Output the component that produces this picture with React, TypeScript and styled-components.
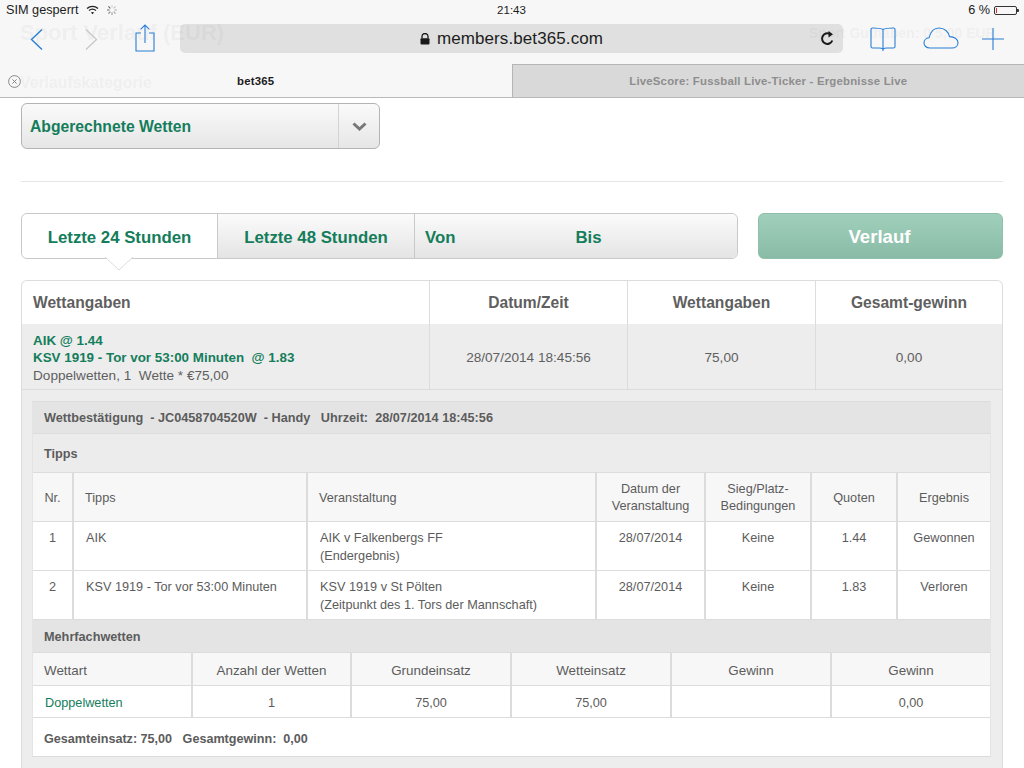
import React from "react";
import styled, { createGlobalStyle } from "styled-components";

const Global = createGlobalStyle`
  html, body { margin: 0; padding: 0; background: #fff; }
  body { width: 1024px; height: 768px; overflow: hidden; font-family: "Liberation Sans", Arial, sans-serif; color: #5c5c5c; }
  * { box-sizing: border-box; }
`;

const GREEN = "#147d5b";
const LINE = "#dcdcdc";

const Page = styled.div`width: 1024px; height: 768px; overflow: hidden; display: flex; flex-direction: column;`;

const Chrome = styled.header`
  position: relative; flex: none; height: 98px; background: #f7f7f7; border-bottom: 1px solid #b9b9b9;
  display: flex; flex-direction: column; overflow: hidden;
`;
const Ghost = styled.span<{ $x: number; $y: number; $size: number }>`
  position: absolute; left: ${p => p.$x}px; top: ${p => p.$y}px; font-size: ${p => p.$size}px; font-weight: 700;
  color: #efefef; white-space: nowrap; line-height: 1; filter: blur(.4px);
`;
const StatusBar = styled.div`
  position: relative; height: 22px; flex: none; display: grid; grid-template-columns: 1fr auto 1fr; align-items: center;
  padding: 0 7px 2px 6px; font-size: 12.7px; color: #1c1c1c; z-index: 3;
`;
const StatusLeft = styled.div`display: flex; align-items: center; gap: 7px;`;
const StatusTime = styled.span`font-size: 11.5px;`;
const StatusRight = styled.div`display: flex; align-items: center; justify-content: flex-end; gap: 4px;`;
const Battery = styled.div`
  position: relative; width: 23px; height: 9px; border: 1px solid #333; border-radius: 2px; padding: 1px;
  &::after { content: ""; position: absolute; right: -3px; top: 2px; width: 2px; height: 3px; background: #333; border-radius: 0 1px 1px 0; }
`;
const BatteryLevel = styled.div`width: 1px; height: 100%; background: #e0312a;`;
const Toolbar = styled.div`
  position: relative; height: 42px; flex: none; display: flex; align-items: flex-start; padding: 2px 20px 0 0; z-index: 3;
`;
const IconSlot = styled.div<{ $w: number; $ml?: number; $mt?: number }>`
  width: ${p => p.$w}px; margin-left: ${p => p.$ml ?? 0}px; margin-top: ${p => p.$mt ?? 0}px; flex: none; display: flex; line-height: 0;
`;
const UrlField = styled.div`
  position: relative; width: 664px; height: 29px; margin-left: 25px; border-radius: 5px; background: rgba(0,0,0,.09);
  display: flex; align-items: center; justify-content: center; gap: 7px; font-size: 17px; color: #1d1d1d; letter-spacing: .1px;
`;
const Reload = styled.div`position: absolute; right: 8px; top: 7px; line-height: 0;`;
const TabStrip = styled.div`position: relative; flex: 1; display: flex; z-index: 1;`;
const BrowserTab = styled.div<{ $active?: boolean }>`
  flex: 1; display: flex; align-items: center; justify-content: center; font-size: 11.4px; font-weight: 700; letter-spacing: .2px;
  color: ${p => (p.$active ? "#1c1c1c" : "#8d8d8d")};
  background: ${p => (p.$active ? "transparent" : "#d9d9d9")};
  border-top: ${p => (p.$active ? "none" : "1px solid #b5b5b5")};
  border-left: ${p => (p.$active ? "none" : "1px solid #b5b5b5")};
`;
const TabClose = styled.div`position: absolute; left: 8px; top: 11px; line-height: 0;`;

const Content = styled.main`flex: 1; padding: 5px 21px 0; display: flex; flex-direction: column; min-height: 0;`;
const Select = styled.div`
  width: 359px; height: 46px; flex: none; display: flex; border: 1px solid #b4b4b4; border-radius: 6px;
  background: linear-gradient(#fafafa, #e6e6e6);
`;
const SelectLabel = styled.div`flex: 1; padding: 2px 0 0 8px; display: flex; align-items: center; font-size: 15.7px; font-weight: 700; color: ${GREEN};`;
const SelectArrow = styled.div`width: 41px; border-left: 1px solid #d3d3d3; display: flex; align-items: center; justify-content: center;`;
const Divider = styled.hr`flex: none; width: 100%; height: 1px; margin: 32px 0 31px; border: 0; background: #e5e5e5;`;
const FilterRow = styled.div`flex: none; display: flex; height: 46px; gap: 20px;`;
const Segments = styled.div`
  width: 717px; display: grid; grid-template-columns: 195px 197px 1fr; border: 1px solid #c9c9c9; border-radius: 6px; position: relative;
`;
const Segment = styled.div<{ $active?: boolean }>`
  display: flex; align-items: center; justify-content: center; font-size: 16.8px; font-weight: 700; color: ${GREEN}; padding-top: 3px;
  background: ${p => (p.$active ? "#fff" : "linear-gradient(#fbfbfb, #e4e4e4)")};
  & + & { border-left: 1px solid #c9c9c9; }
  border-radius: ${p => (p.$active ? "6px 0 0 6px" : "0")};
`;
const DateSegment = styled(Segment)`
  justify-content: flex-start; padding-left: 10px; gap: 120px; border-radius: 0 6px 6px 0;
`;
const Pointer = styled.div`
  position: absolute; left: 83px; top: 100%; width: 28px; height: 14px; line-height: 0; margin-top: -1px;
`;
const HistoryButton = styled.button`
  flex: 1; border: 1px solid #8fc0ab; border-radius: 6px; background: linear-gradient(#a0d0bb, #8abba6); color: #fff;
  font: 700 18.6px "Liberation Sans", Arial, sans-serif; padding: 1px 2px 0 0;
`;
const Card = styled.section`
  flex: 1; margin-top: 21px; border: 1px solid ${LINE}; border-bottom: 0; border-radius: 6px 6px 0 0; background: #ededed; overflow: hidden; min-height: 0;
`;
const SummaryGrid = styled.div`display: grid; grid-template-columns: 407px 198px 188px 1fr;`;
const SummaryHead = styled.div<{ $left?: boolean }>`
  height: 43px; background: #fff; display: flex; align-items: center; font-size: 15.6px; font-weight: 700; color: #5f5f5f;
  justify-content: ${p => (p.$left ? "flex-start" : "center")};
  padding-left: ${p => (p.$left ? "11px" : "0")};
  & + & { border-left: 1px solid ${LINE}; }
`;
const SummaryCell = styled.div<{ $left?: boolean }>`
  height: 66px; border-bottom: 1px solid ${LINE}; display: flex; flex-direction: ${p => (p.$left ? "column" : "row")};
  align-items: ${p => (p.$left ? "flex-start" : "center")}; justify-content: center; font-size: 13.6px; color: #5f5f5f;
  padding: 3px 0 0 ${p => (p.$left ? "11px" : "0")}; line-height: 17.5px;
  & + & { border-left: 1px solid ${LINE}; }
`;
const Pick = styled.div`font-weight: 700; font-size: 13.4px; color: ${GREEN}; white-space: pre;`;
const Stake = styled.div`white-space: pre;`;
const Detail = styled.div`
  margin: 11px 11px 0 10px; border-left: 1px solid #e4e4e4; border-right: 1px solid #e4e4e4; border-bottom: 1px solid ${LINE};
`;
const Bar = styled.div<{ $h: number; $bg: string; $drop?: number }>`
  height: ${p => p.$h}px; background: ${p => p.$bg}; border-top: 1px solid ${LINE}; display: flex; align-items: center;
  padding: ${p => p.$drop ?? 0}px 0 0 11px; font-size: 12.7px; font-weight: 700; color: #5c5c5c; white-space: pre;
`;
const Rows = styled.div<{ $cols: string; $n: number }>`
  display: grid; grid-template-columns: ${p => p.$cols};
  & > * + * { border-left: 2px solid ${LINE}; }
  & > *:nth-child(${p => p.$n}n + 1) { border-left: 0; }
`;
const Cell = styled.div<{ $h: number; $head?: boolean; $left?: boolean; $top?: boolean; $pad?: number; $wrap?: boolean; $big?: boolean }>`
  height: ${p => p.$h}px; background: ${p => (p.$head ? "#f7f7f7" : "#fff")}; border-top: 1px solid ${LINE};
  display: flex; flex-direction: column; line-height: 17.5px; font-size: ${p => (p.$big ? 13.4 : 12.7)}px; color: #5c5c5c;
  justify-content: ${p => (p.$top ? "flex-start" : "center")};
  align-items: ${p => (p.$left ? "flex-start" : "center")};
  text-align: ${p => (p.$left ? "left" : "center")};
  padding: ${p => (p.$top ? 8 : p.$wrap ? 2 : 4)}px 0 0 ${p => (p.$left ? (p.$pad ?? 11) : 0)}px;
  white-space: nowrap;
`;
const TypeLink = styled.span`color: ${GREEN};`;
const Totals = styled.div`
  height: 39px; background: #fff; border-top: 1px solid ${LINE}; display: flex; align-items: center; padding: 3px 0 0 11px;
  font-size: 12.6px; font-weight: 700; color: #5c5c5c; white-space: pre;
`;

const BLUE = "#2a7fd6";

const Wifi = () => (
  <svg width="13" height="10" viewBox="0 0 13 10" fill="none" stroke="#222" strokeWidth="1.3">
    <path d="M1 3.4C4.2.6 8.8.6 12 3.4" /><path d="M3 5.5c2-1.6 5-1.6 7 0" />
    <path d="M6.5 9.2 4.9 7.4c1-.7 2.2-.7 3.2 0z" fill="#222" stroke="none" />
  </svg>
);
const Spinner = () => (
  <svg width="12" height="12" viewBox="0 0 12 12" stroke="#555" strokeWidth="1">
    {[0, 45, 90, 135, 180, 225, 270, 315].map((a, i) => (
      <line key={a} x1="6" y1="1" x2="6" y2="3.6" transform={`rotate(${a} 6 6)`} opacity={0.25 + i * 0.1} />
    ))}
  </svg>
);
const Chevron = ({ dir, color }: { dir: "l" | "r"; color: string }) => (
  <svg width="13" height="21" viewBox="0 0 13 21" fill="none" stroke={color} strokeWidth="1.4">
    <path d={dir === "l" ? "M12 .5 1.500 10.500 12 20.500" : "M1 .5l10.500 10L1 20.500"} />
  </svg>
);
const Share = () => (
  <svg width="20" height="28" viewBox="0 0 20 28" fill="none" stroke={BLUE} strokeWidth="1.1">
    <path d="M6 9H1v18h18V9h-5" /><path d="M10 19V1M5.6 5.4 10 1l4.4 4.4" />
  </svg>
);
const Book = () => (
  <svg width="26" height="24" viewBox="0 0 26 24" fill="none" stroke={BLUE} strokeWidth="1.1">
    <path d="M13 2.500C11.500 1.500 8 1 2.500 1 1.600 1 1 1.600 1 2.500v17c0 .9.600 1.500 1.500 1.500H9c2 0 3.200.3 4 1 .8-.7 2-1 4-1h6.500c.9 0 1.500-.6 1.500-1.500v-17C25 1.600 24.400 1 23.500 1 18 1 14.500 1.500 13 2.500zM13 2.500V24" />
  </svg>
);
const Cloud = () => (
  <svg width="36" height="22" viewBox="0 0 36 22" fill="none" stroke={BLUE} strokeWidth="1.1">
    <path d="M7 21C3.200 21 1 18.700 1 16c0-2.800 2.200-5 5-5.200C7.500 5 11 1 16 1c5.500 0 9.500 3.800 10.500 8.600C31 9.500 35 12 35 15.700 35 18.900 32.300 21 29 21z" />
  </svg>
);
const Plus = () => (
  <svg width="22" height="22" viewBox="0 0 22 22" stroke={BLUE} strokeWidth="1.1">
    <path d="M11 0v22M0 11h22" />
  </svg>
);
const Lock = () => (
  <svg width="10" height="12" viewBox="0 0 10 12">
    <path d="M2 5.500V3.500a3 3 0 0 1 6 0v2" fill="none" stroke="#1a1a1a" strokeWidth="1.300" />
    <rect x="0.500" y="5.200" width="9" height="6.300" rx="1" fill="#1a1a1a" />
  </svg>
);
const ReloadIcon = () => (
  <svg width="15" height="15" viewBox="0 0 15 15" fill="none">
    <path d="M12.300 9.500A5.300 5.300 0 1 1 10 3" stroke="#1a1a1a" strokeWidth="2" />
    <path d="M8.500 0 13 3.200 8.500 6.500z" fill="#1a1a1a" />
  </svg>
);
const CloseIcon = () => (
  <svg width="13" height="13" viewBox="0 0 13 13" fill="none" stroke="#7c7c7c" strokeWidth=".9">
    <circle cx="6.500" cy="6.500" r="5.900" /><path d="M4.400 4.400l4.200 4.200M8.600 4.400l-4.200 4.200" />
  </svg>
);
const Caret = () => (
  <svg width="15" height="9" viewBox="0 0 15 9" fill="none" stroke="#777" strokeWidth="3">
    <path d="M1.500 1.500l6 5.500 6-5.500" />
  </svg>
);
const PointerShape = () => (
  <svg width="28" height="14" viewBox="0 0 28 14">
    <path d="M0 0l14 13L28 0" fill="#fff" stroke="#dcdcdc" />
  </svg>
);

const tipCols = "39px 234px 289px 109px 106px 86px 1fr";
const multiCols = "158px 159px 160px 160px 160px 1fr";

export default function App() {
  return (
    <Page>
      <Global />
      <Chrome>
        <Ghost $x={20} $y={22} $size={22}>Sport Verlauf (EUR)</Ghost>
        <Ghost $x={20} $y={75} $size={15.8}>Verlaufskategorie</Ghost>
        <Ghost $x={809} $y={26} $size={14}>Sport Guthaben: 0 5,00 EUR</Ghost>
        <StatusBar>
          <StatusLeft>SIM gesperrt <Wifi /><Spinner /></StatusLeft>
          <StatusTime>21:43</StatusTime>
          <StatusRight>6 %<Battery><BatteryLevel /></Battery></StatusRight>
        </StatusBar>
        <Toolbar>
          <IconSlot $w={13} $ml={30} $mt={5}><Chevron dir="l" color={BLUE} /></IconSlot>
          <IconSlot $w={13} $ml={42} $mt={5}><Chevron dir="r" color="#c9c9c9" /></IconSlot>
          <IconSlot $w={20} $ml={37}><Share /></IconSlot>
          <UrlField>
            <Lock /> members.bet365.com
            <Reload><ReloadIcon /></Reload>
          </UrlField>
          <IconSlot $w={26} $ml={27} $mt={3}><Book /></IconSlot>
          <IconSlot $w={36} $ml={27} $mt={3}><Cloud /></IconSlot>
          <IconSlot $w={22} $ml={23} $mt={4}><Plus /></IconSlot>
        </Toolbar>
        <TabStrip>
          <TabClose><CloseIcon /></TabClose>
          <BrowserTab $active>bet365</BrowserTab>
          <BrowserTab>LiveScore: Fussball Live-Ticker - Ergebnisse Live</BrowserTab>
        </TabStrip>
      </Chrome>
      <Content>
        <Select>
          <SelectLabel>Abgerechnete Wetten</SelectLabel>
          <SelectArrow><Caret /></SelectArrow>
        </Select>
        <Divider />
        <FilterRow>
          <Segments>
            <Segment $active>Letzte 24 Stunden</Segment>
            <Segment>Letzte 48 Stunden</Segment>
            <DateSegment><span>Von</span><span>Bis</span></DateSegment>
            <Pointer><PointerShape /></Pointer>
          </Segments>
          <HistoryButton>Verlauf</HistoryButton>
        </FilterRow>
        <Card>
          <SummaryGrid>
            <SummaryHead $left>Wettangaben</SummaryHead>
            <SummaryHead>Datum/Zeit</SummaryHead>
            <SummaryHead>Wettangaben</SummaryHead>
            <SummaryHead>Gesamt-gewinn</SummaryHead>
            <SummaryCell $left>
              <Pick>AIK @ 1.44</Pick>
              <Pick>KSV 1919 - Tor vor 53:00 Minuten  @ 1.83</Pick>
              <Stake>Doppelwetten, 1  Wette * €75,00</Stake>
            </SummaryCell>
            <SummaryCell>28/07/2014 18:45:56</SummaryCell>
            <SummaryCell>75,00</SummaryCell>
            <SummaryCell>0,00</SummaryCell>
          </SummaryGrid>
          <Detail>
            <Bar $h={32} $bg="#e4e4e4">Wettbestätigung  - JC0458704520W  - Handy   Uhrzeit:  28/07/2014 18:45:56</Bar>
            <Bar $h={39} $bg="#ececec" $drop={1}>Tipps</Bar>
            <Rows $cols={tipCols} $n={7}>
              <Cell $h={49} $head>Nr.</Cell>
              <Cell $h={49} $head $left>Tipps</Cell>
              <Cell $h={49} $head $left>Veranstaltung</Cell>
              <Cell $h={49} $head $wrap>Datum der<br />Veranstaltung</Cell>
              <Cell $h={49} $head $wrap>Sieg/Platz-<br />Bedingungen</Cell>
              <Cell $h={49} $head>Quoten</Cell>
              <Cell $h={49} $head>Ergebnis</Cell>

              <Cell $h={49} $top>1</Cell>
              <Cell $h={49} $top $left $pad={12}>AIK</Cell>
              <Cell $h={49} $top $left $pad={12}>AIK v Falkenbergs FF<br />(Endergebnis)</Cell>
              <Cell $h={49} $top>28/07/2014</Cell>
              <Cell $h={49} $top>Keine</Cell>
              <Cell $h={49} $top>1.44</Cell>
              <Cell $h={49} $top>Gewonnen</Cell>

              <Cell $h={49} $top>2</Cell>
              <Cell $h={49} $top $left $pad={12}>KSV 1919 - Tor vor 53:00 Minuten</Cell>
              <Cell $h={49} $top $left $pad={12}>KSV 1919 v St Pölten<br />(Zeitpunkt des 1. Tors der Mannschaft)</Cell>
              <Cell $h={49} $top>28/07/2014</Cell>
              <Cell $h={49} $top>Keine</Cell>
              <Cell $h={49} $top>1.83</Cell>
              <Cell $h={49} $top>Verloren</Cell>
            </Rows>
            <Bar $h={33} $bg="#e4e4e4" $drop={2}>Mehrfachwetten</Bar>
            <Rows $cols={multiCols} $n={6}>
              <Cell $h={33} $head $left $big>Wettart</Cell>
              <Cell $h={33} $head $big>Anzahl der Wetten</Cell>
              <Cell $h={33} $head $big>Grundeinsatz</Cell>
              <Cell $h={33} $head $big>Wetteinsatz</Cell>
              <Cell $h={33} $head $big>Gewinn</Cell>
              <Cell $h={33} $head $big>Gewinn</Cell>

              <Cell $h={32} $left $pad={12}><TypeLink>Doppelwetten</TypeLink></Cell>
              <Cell $h={32}>1</Cell>
              <Cell $h={32}>75,00</Cell>
              <Cell $h={32}>75,00</Cell>
              <Cell $h={32} />
              <Cell $h={32}>0,00</Cell>
            </Rows>
            <Totals>Gesamteinsatz: 75,00   Gesamtgewinn:  0,00</Totals>
          </Detail>
        </Card>
      </Content>
    </Page>
  );
}
